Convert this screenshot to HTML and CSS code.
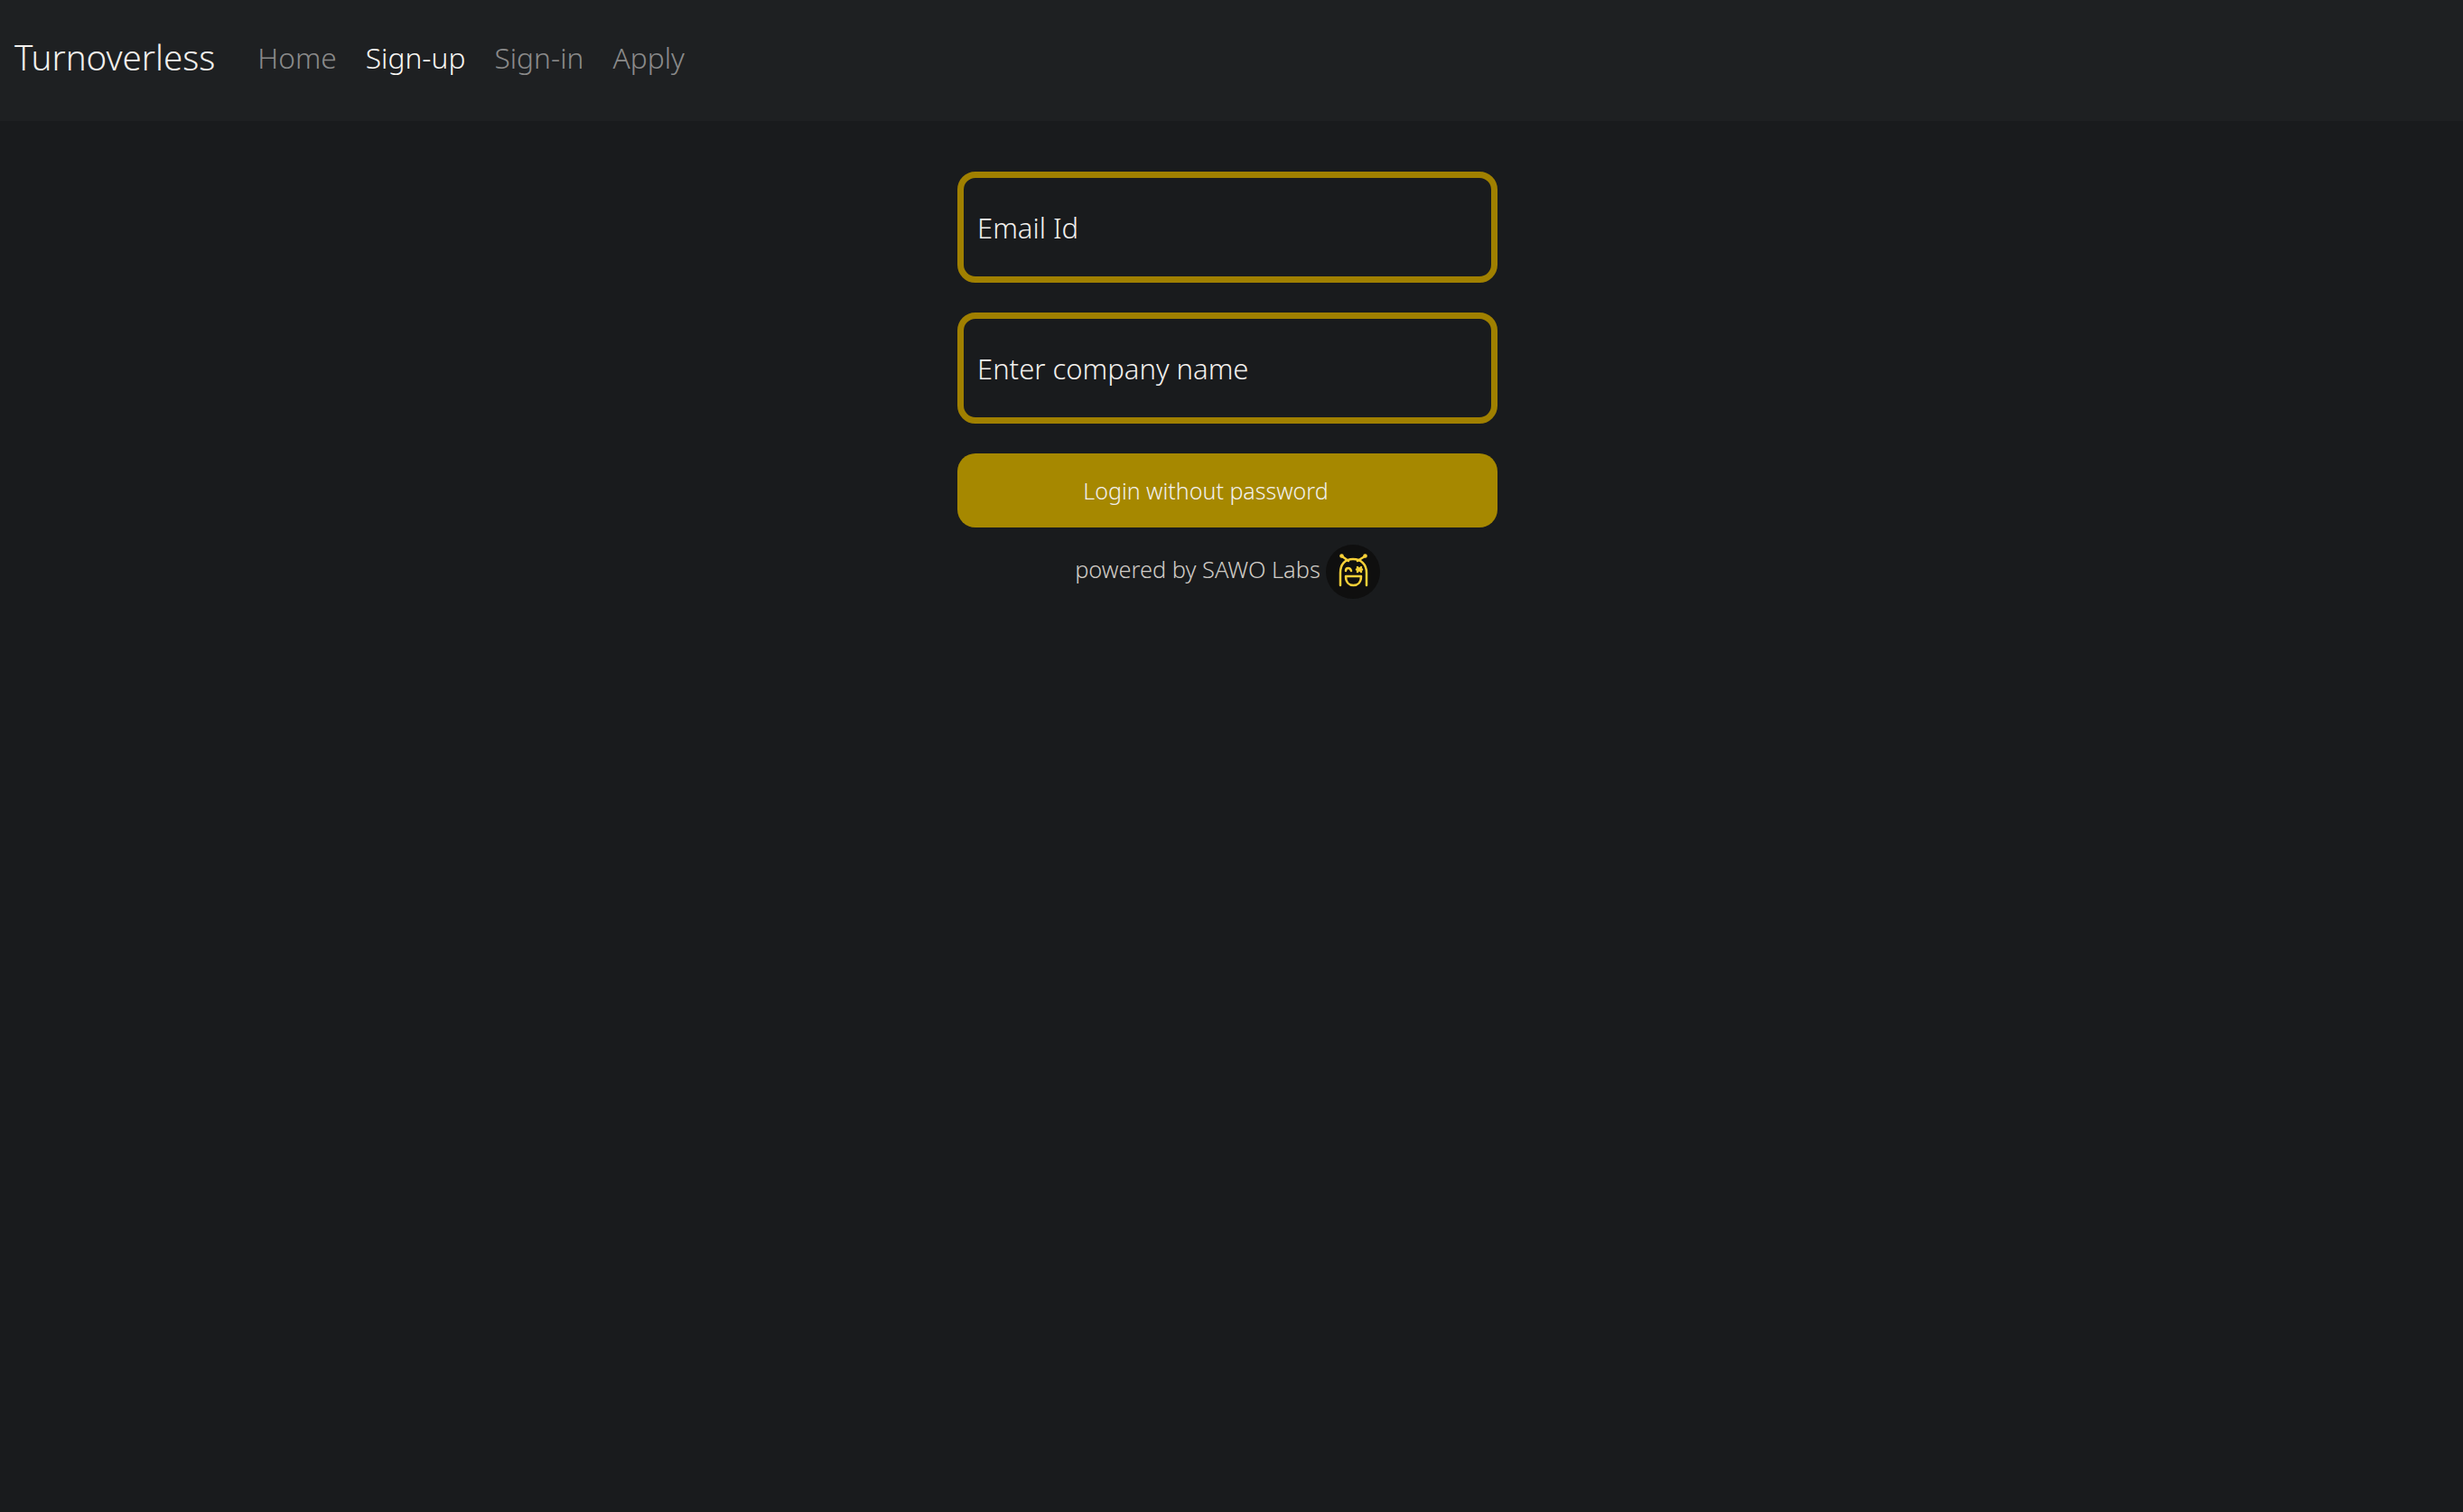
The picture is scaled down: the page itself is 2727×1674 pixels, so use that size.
FILE: index.html
```html
<!DOCTYPE html>
<html lang="en">
<head>
<meta charset="utf-8">
<title>Turnoverless</title>
<link rel="stylesheet" href="styles.css">
</head>
<body>
<nav class="navbar">
  <a class="brand" href="#">Turnoverless</a>
  <ul class="nav-links">
    <li><a class="nav-link" href="#">Home</a></li>
    <li><a class="nav-link active" href="#">Sign-up</a></li>
    <li><a class="nav-link" href="#">Sign-in</a></li>
    <li><a class="nav-link" href="#">Apply</a></li>
  </ul>
</nav>
<main class="main">
  <form class="login">
    <input class="field" type="text" placeholder="Email Id">
    <input class="field" type="text" placeholder="Enter company name">
    <button class="submit" type="button"><span>Login without password</span></button>
    <div class="powered">
      <span class="powered-text">powered by SAWO Labs</span>
      <svg class="logo" viewBox="0 0 60 60" aria-hidden="true">
        <circle cx="30" cy="30" r="30" fill="#0f0f0f"/>
        <g fill="none" stroke="#f7d038" stroke-width="2.500" stroke-linecap="round" stroke-linejoin="round">
          <path d="M16 45V31C16 22 21 16 30 16C39 16 45 22 45 31V45"/>
          <path d="M18 13L25 18M43 13L35 18"/>
          <path d="M22 29C22 25 27 25 28 29"/>
          <path d="M22 35H39C39 42 35 45 30.500 45C26 45 22 42 22 35Z"/>
          <path d="M35 25L39 30M39 25L35 30M34 27.500H40"/>
        </g>
        <circle cx="17.500" cy="12.500" r="2.300" fill="#f7d038"/>
        <circle cx="43.500" cy="12.500" r="2.300" fill="#f7d038"/>
      </svg>
    </div>
  </form>
</main>
</body>
</html>
```
FILE: styles.css
```css
* { box-sizing: border-box; }
html, body { margin: 0; height: 100%; }
body {
  background: #191b1d;
  font-family: "Noto Sans", "Open Sans", sans-serif;
  font-weight: 300;
  color: #f2f0ed;
}
.navbar {
  height: 134px;
  background: #1e2022;
  display: flex;
  align-items: center;
  padding: 0 16px 8px;
}
.brand {
  font-size: 38.500px;
  color: #f2f0ed;
  text-decoration: none;
  margin-right: 47px;
}
.nav-links {
  list-style: none;
  display: flex;
  gap: 32px;
  margin: 0;
  padding: 0;
}
.nav-link {
  font-size: 31.700px;
  color: #8a8a8a;
  text-decoration: none;
}
.nav-link.active { color: #f8f6f3; }
.main {
  display: flex;
  justify-content: center;
  padding: 56px 9px 0 0;
}
.login {
  width: 598px;
  display: flex;
  flex-direction: column;
}
.field {
  height: 123px;
  border: 7px solid #a08000;
  border-radius: 20px;
  background: #191b1d;
  padding: 1px 15px 0;
  margin-bottom: 33px;
  font: inherit;
  font-size: 31px;
  color: #f2f0ed;
  outline: none;
}
.field::placeholder { color: #f2f0ed; opacity: 1; }
.submit {
  height: 82px;
  border: 0;
  border-radius: 20px;
  background: #a68800;
  color: #f2f0ed;
  font: inherit;
  font-size: 25px;
  padding: 0 48px 0 0;
}
.powered {
  display: flex;
  align-items: center;
  justify-content: center;
  gap: 6px;
  margin-top: 19px;
  font-size: 25.400px;
  color: #d0ccc6;
}
.powered-text { margin-bottom: 6px; }
.logo { width: 60px; height: 60px; }
```
